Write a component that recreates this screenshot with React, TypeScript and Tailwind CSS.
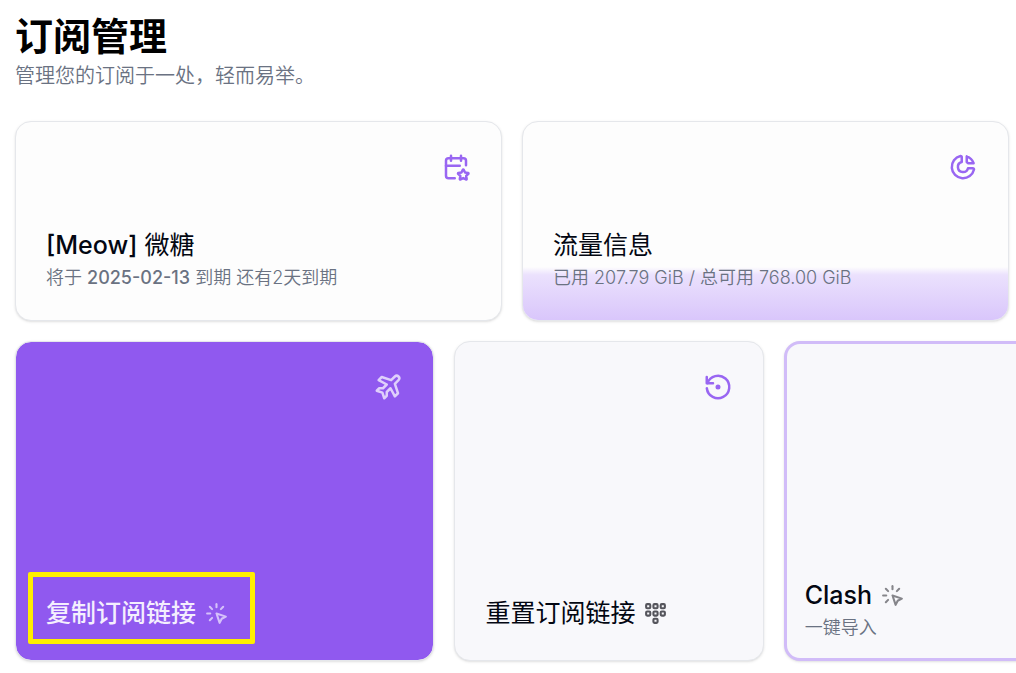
import type { ReactNode } from "react";
import clsx from "clsx";
import {
  TbCalendarStar,
  TbChartDonut,
  TbClick,
  TbDialpad,
  TbPlaneTilt,
  TbRestore,
} from "react-icons/tb";

interface InfoCardProps {
  icon: ReactNode;
  title: ReactNode;
  children: ReactNode;
  usage?: number; // percent of the card that is filled
}

function InfoCard({ icon, title, children, usage }: InfoCardProps) {
  return (
    <section className="relative flex min-h-[200px] flex-1 flex-col justify-between overflow-hidden rounded-2xl border border-gray-200 bg-[#fdfdfd] px-[30px] pt-[30px] pb-[26px] shadow-sm">
      {usage !== undefined && (
        <div
          className="absolute inset-x-0 bottom-0 bg-linear-to-b from-[#fdfdfd] via-[#ebe1fd] via-15% to-[#d9c6fb]"
          style={{ height: `${usage}%` }}
        />
      )}
      <div className="relative self-end text-[#9966f2]">{icon}</div>
      <div className="relative">
        <h2 className="text-[25px] leading-[34px] text-gray-950">{title}</h2>
        <p className="text-[18px] leading-8 font-[350] text-gray-500">{children}</p>
      </div>
    </section>
  );
}

interface ActionCardProps {
  className: string;
  icon?: ReactNode;
  title: ReactNode;
  titleIcon: ReactNode;
  description?: string;
  highlighted?: boolean;
}

function ActionCard({
  className,
  icon,
  title,
  titleIcon,
  description,
  highlighted,
}: ActionCardProps) {
  return (
    <button
      type="button"
      className={clsx(
        "relative flex min-h-[320px] shrink-0 flex-col justify-between rounded-2xl text-left shadow-sm",
        className
      )}
    >
      <span className="self-end">{icon}</span>
      <span className="flex flex-col">
        <span className="flex items-center gap-2 text-[25px] leading-[34px]">
          {title}
          {titleIcon}
        </span>
        {description && (
          <span className="text-[18px] leading-8 font-[350] text-gray-500">{description}</span>
        )}
      </span>
      {highlighted && (
        <span className="absolute bottom-4 left-3 h-[72px] w-[227px] rounded-xs border-[5px] border-[#ffee00]" />
      )}
    </button>
  );
}

export default function App() {
  return (
    <main className="overflow-hidden bg-white pt-3 pb-3 pl-[15px] font-['Inter','Noto_Sans_CJK_SC',sans-serif]">
      <header className="mb-[29px]">
        <h1 className="text-[38px] leading-[48px] font-bold text-black">订阅管理</h1>
        <p className="text-[20px] leading-8 font-[350] text-gray-500">
          管理您的订阅于一处，轻而易举。
        </p>
      </header>

      <div className="mb-5 flex gap-5 pr-[7px]">
        <InfoCard
          icon={<TbCalendarStar size={30} />}
          title={
            <>
              <span className="font-medium">[Meow]</span> 微糖
            </>
          }
        >
          将于 <span className="font-medium">2025-02-13</span> 到期{" "}
          <span>还有2天到期</span>
        </InfoCard>
        <InfoCard icon={<TbChartDonut size={30} />} title="流量信息" usage={27}>
          已用 207.79 GiB / 总可用 768.00 GiB
        </InfoCard>
      </div>

      <div className="flex gap-5">
        <ActionCard
          className="w-[41.9%] border border-gray-200 bg-[#9059ef] bg-clip-padding p-[30px] font-medium text-[#f4eefe]"
          icon={<TbPlaneTilt size={30} className="text-[#dfd0fb]" />}
          title="复制订阅链接"
          titleIcon={<TbClick size={25} className="text-[#d5c1fa]" />}
          highlighted
        />
        <ActionCard
          className="w-[30.9%] border border-gray-200 bg-[#f8f8fb] p-[30px] text-gray-950"
          icon={<TbRestore size={30} className="text-[#9966f2]" />}
          title="重置订阅链接"
          titleIcon={<TbDialpad size={25} className="text-[#55555c]" />}
        />
        <ActionCard
          className="w-[30.9%] border-[3px] border-[#d1bcf8] bg-[#f8f8fb] px-[18px] py-[14px] text-gray-950"
          title={<span className="font-medium">Clash</span>}
          titleIcon={<TbClick size={25} className="text-[#85858a]" />}
          description="一键导入"
        />
      </div>
    </main>
  );
}
